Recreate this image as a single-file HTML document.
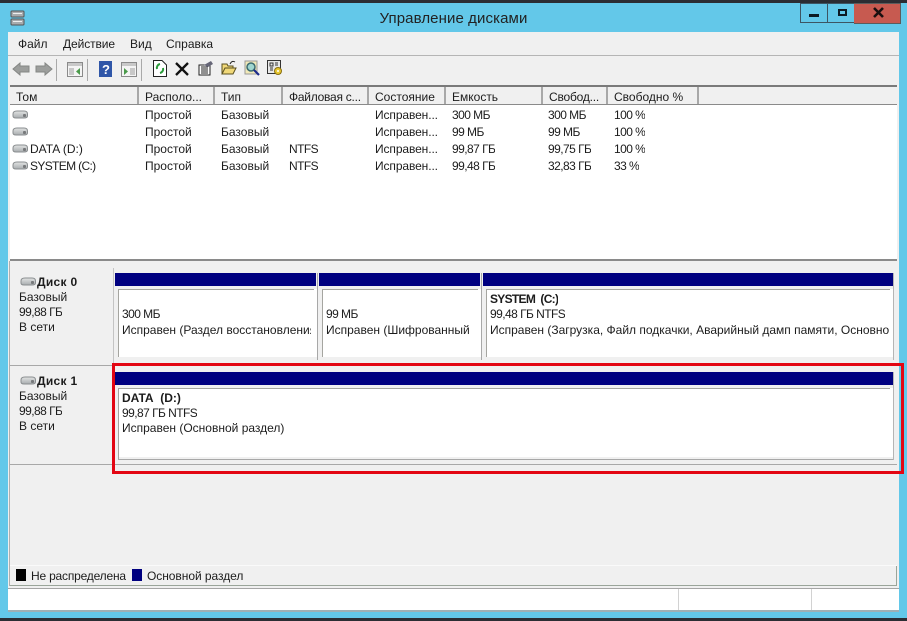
<!DOCTYPE html>
<html><head><meta charset="utf-8">
<style>
html,body{margin:0;padding:0;width:907px;height:621px;overflow:hidden;background:#63c8e9;font-family:"Liberation Sans",sans-serif;font-size:12px;color:#1c1c1c}
.a{position:absolute}
.t{position:absolute;white-space:nowrap;line-height:15px;overflow:hidden}
.n{letter-spacing:-.55px}
.hs{position:absolute;top:87px;height:17px;width:2px;background:#a8a8a8}
.sep{position:absolute;top:59px;height:22px;width:1px;background:#a9a9a9}
.bar{position:absolute;background:#000080;height:13px}
.box{position:absolute;background:#fff;box-sizing:border-box}
.tl{position:absolute;height:1px;background:#a5a5a0}
.ll{position:absolute;width:1px;background:#a5a5a0}
</style></head>
<body>
<svg width="0" height="0" style="position:absolute"><defs>
<linearGradient id="g" x1="0" y1="0" x2="0" y2="1"><stop offset="0" stop-color="#e2e4e4"/><stop offset="1" stop-color="#a8acae"/></linearGradient>
<g id="hd"><path d="M1 4 Q1 1 5 1 H12 Q15.5 1 15.5 4 V6 Q15.5 8 12 8 H4 Q1 8 1 6Z" fill="url(#g)" stroke="#8a8e90"/><rect x="11" y="4" width="3" height="3" rx="1" fill="#77797b"/></g>
</defs></svg>

<div class="a" style="left:0;top:0;width:907px;height:3px;background:#2b2d33"></div>
<div class="a" style="left:0;top:618px;width:907px;height:3px;background:#2b2d33"></div>

<svg class="a" style="left:10px;top:10px" width="16" height="16"><rect x="1" y="1" width="13" height="6" rx="1" fill="#a7abae" stroke="#555"/><rect x="1" y="9" width="13" height="6" rx="1" fill="#a7abae" stroke="#555"/><rect x="3" y="3" width="9" height="1" fill="#eee"/><rect x="3" y="11" width="9" height="1" fill="#eee"/></svg>
<div class="t" style="left:0;top:10px;width:907px;text-align:center;font-size:15px;line-height:18px;color:#222;letter-spacing:.1px">Управление дисками</div>

<div class="a" style="left:800px;top:3px;width:28px;height:20px;border:1px solid #3d5563;box-sizing:border-box"></div>
<div class="a" style="left:828px;top:3px;width:27px;height:20px;border:1px solid #3d5563;border-left:0;box-sizing:border-box"></div>
<div class="a" style="left:854px;top:3px;width:47px;height:21px;background:#c75a50;border:1px solid #5c5c5c;border-left:0;box-sizing:border-box"></div>
<div class="a" style="left:809px;top:14px;width:10px;height:3px;background:#0c1a24"></div>
<div class="a" style="left:838px;top:9px;width:5px;height:3px;border:2px solid #0c1a24;box-sizing:content-box"></div>
<svg class="a" style="left:873px;top:7px" width="12" height="11"><path d="M1 1 L10 10 M10 1 L1 10" stroke="#1a1010" stroke-width="2.6"/></svg>

<div class="a" style="left:8px;top:32px;width:891px;height:579px;background:#f0f0f0"></div>
<div class="a" style="left:8px;top:55px;width:891px;height:1px;background:#b5b5b5"></div>
<div class="t" style="left:18px;top:37px">Файл</div>
<div class="t" style="left:63px;top:37px;letter-spacing:-.1px">Действие</div>
<div class="t" style="left:130px;top:37px">Вид</div>
<div class="t" style="left:166px;top:37px">Справка</div>

<svg class="a" style="left:12px;top:62px" width="42" height="14"><path d="M1 7 L8 1 V4 H17 V10 H8 V13Z" fill="#9c9e9c" stroke="#858785"/><path d="M40 7 L33 1 V4 H24 V10 H33 V13Z" fill="#9c9e9c" stroke="#858785"/></svg>
<div class="sep" style="left:56px"></div>
<svg class="a" style="left:67px;top:62px" width="16" height="15"><rect x=".5" y=".5" width="15" height="14" fill="#f4f4f4" stroke="#8a8a8a"/><rect x="1" y="1" width="14" height="3" fill="#c8c8c8"/><rect x="2" y="6" width="5" height="7" fill="#c8c8c8"/><path d="M13 6 V13 L9 9.5Z" fill="#4a9a4a"/></svg>
<div class="sep" style="left:87px"></div>
<svg class="a" style="left:99px;top:61px" width="13" height="16"><rect width="13" height="16" fill="#2f56a8"/><text x="3" y="13" font-size="13" font-weight="bold" fill="#fff" font-family="Liberation Sans">?</text></svg>
<svg class="a" style="left:121px;top:62px" width="16" height="15"><rect x=".5" y=".5" width="15" height="14" fill="#f4f4f4" stroke="#8a8a8a"/><rect x="1" y="1" width="14" height="3" fill="#c8c8c8"/><rect x="9" y="6" width="5" height="7" fill="#c8c8c8"/><path d="M3 6 V13 L7 9.5Z" fill="#4a9a4a"/></svg>
<div class="sep" style="left:141px"></div>
<svg class="a" style="left:153px;top:60px" width="14" height="17"><path d="M.5 .5 H9 L13.5 5 V16.5 H.5Z" fill="#fff" stroke="#222"/><path d="M7 4 A4 4 0 0 0 4 9 M7 13 A4 4 0 0 0 10 8" fill="none" stroke="#2a9a3a" stroke-width="2"/></svg>
<svg class="a" style="left:175px;top:62px" width="14" height="14"><path d="M1 1 L13 13 M13 1 L1 13" stroke="#111" stroke-width="2.3"/></svg>
<svg class="a" style="left:198px;top:60px" width="16" height="16"><rect x="1" y="5" width="11" height="10" fill="#fff" stroke="#222"/><path d="M3 7 H10 M3 9 H10 M3 11 H10 M3 13 H10" stroke="#222"/><path d="M6 5 L13 1 L15 4 L10 7Z" fill="#667"/></svg>
<svg class="a" style="left:221px;top:60px" width="16" height="15"><path d="M1 14 V4 H6 L7 6 H12 V8 H4 L1 14 H12 L15 8 H4" fill="#f0d878" stroke="#5a5020"/><path d="M9 4 Q11 0 14 2" fill="none" stroke="#222"/></svg>
<svg class="a" style="left:244px;top:60px" width="16" height="17"><rect x="1" y="1" width="12" height="13" fill="#f1e9b8" stroke="#999"/><circle cx="7" cy="7" r="4" fill="#9fd6cf" stroke="#3a6a70" stroke-width="1.5"/><path d="M10 10 L15 15" stroke="#1b2a8a" stroke-width="2.2"/></svg>
<svg class="a" style="left:267px;top:60px" width="17" height="17"><rect x=".5" y=".5" width="13" height="13" fill="#e8e8e8" stroke="#333"/><path d="M3 3 H6 V6 H3Z M8 3 H11 M8 5 H11 M3 8 H6 M3 10 H6" stroke="#333" fill="none"/><circle cx="11" cy="11" r="3.5" fill="#e8c830" stroke="#8a7010"/><circle cx="11" cy="11" r="1" fill="#fff"/></svg>

<div class="a" style="left:10px;top:85px;width:887px;height:2px;background:#7a7a7a"></div>
<div class="a" style="left:10px;top:104px;width:887px;height:1px;background:#8a8a8a"></div>
<div class="hs" style="left:137px"></div>
<div class="hs" style="left:213px"></div>
<div class="hs" style="left:281px"></div>
<div class="hs" style="left:367px"></div>
<div class="hs" style="left:444px"></div>
<div class="hs" style="left:541px"></div>
<div class="hs" style="left:606px"></div>
<div class="hs" style="left:697px"></div>
<div class="t" style="left:16px;top:90px">Том</div>
<div class="t" style="left:145px;top:90px">Располо...</div>
<div class="t" style="left:221px;top:90px">Тип</div>
<div class="t" style="left:289px;top:90px;letter-spacing:-.25px">Файловая с...</div>
<div class="t" style="left:375px;top:90px">Состояние</div>
<div class="t" style="left:452px;top:90px">Емкость</div>
<div class="t" style="left:549px;top:90px;letter-spacing:-.2px">Свобод...</div>
<div class="t" style="left:614px;top:90px">Свободно %</div>

<div class="a" style="left:10px;top:105px;width:887px;height:154px;background:#fff"></div>
<svg class="a" style="left:12px;top:110px" width="17" height="9"><use href="#hd"/></svg>
<svg class="a" style="left:12px;top:127px" width="17" height="9"><use href="#hd"/></svg>
<svg class="a" style="left:12px;top:144px" width="17" height="9"><use href="#hd"/></svg>
<svg class="a" style="left:12px;top:161px" width="17" height="9"><use href="#hd"/></svg>
<div class="t" style="left:30px;top:142px">DATA (D:)</div>
<div class="t" style="left:30px;top:159px;letter-spacing:-.65px">SYSTEM (C:)</div>

<div class="t" style="left:145px;top:108px">Простой</div><div class="t" style="left:221px;top:108px">Базовый</div><div class="t" style="left:375px;top:108px;letter-spacing:-.1px">Исправен...</div><div class="t n" style="left:452px;top:108px">300 МБ</div><div class="t n" style="left:548px;top:108px">300 МБ</div><div class="t n" style="left:614px;top:108px">100 %</div>
<div class="t" style="left:145px;top:125px">Простой</div><div class="t" style="left:221px;top:125px">Базовый</div><div class="t" style="left:375px;top:125px;letter-spacing:-.1px">Исправен...</div><div class="t n" style="left:452px;top:125px">99 МБ</div><div class="t n" style="left:548px;top:125px">99 МБ</div><div class="t n" style="left:614px;top:125px">100 %</div>
<div class="t" style="left:145px;top:142px">Простой</div><div class="t" style="left:221px;top:142px">Базовый</div><div class="t n" style="left:289px;top:142px">NTFS</div><div class="t" style="left:375px;top:142px;letter-spacing:-.1px">Исправен...</div><div class="t n" style="left:452px;top:142px">99,87 ГБ</div><div class="t n" style="left:548px;top:142px">99,75 ГБ</div><div class="t n" style="left:614px;top:142px">100 %</div>
<div class="t" style="left:145px;top:159px">Простой</div><div class="t" style="left:221px;top:159px">Базовый</div><div class="t n" style="left:289px;top:159px">NTFS</div><div class="t" style="left:375px;top:159px;letter-spacing:-.1px">Исправен...</div><div class="t n" style="left:452px;top:159px">99,48 ГБ</div><div class="t n" style="left:548px;top:159px">32,83 ГБ</div><div class="t n" style="left:614px;top:159px">33 %</div>

<div class="a" style="left:10px;top:259px;width:887px;height:2px;background:#8a8a8a"></div>
<div class="a" style="left:9px;top:261px;width:1px;height:325px;background:#b0b0b0"></div>
<div class="a" style="left:10px;top:365px;width:102px;height:1px;background:#a8a8a8"></div>
<div class="a" style="left:10px;top:464px;width:887px;height:1px;background:#a8a8a8"></div>
<div class="a" style="left:113px;top:268px;width:1px;height:97px;background:#c4c4c4"></div>

<svg class="a" style="left:20px;top:277px" width="17" height="9"><use href="#hd"/></svg>
<div class="t" style="left:37px;top:275px;font-weight:bold;letter-spacing:.3px">Диск 0</div>
<div class="t" style="left:19px;top:290px">Базовый</div>
<div class="t n" style="left:19px;top:305px">99,88 ГБ</div>
<div class="t" style="left:19px;top:320px">В сети</div>

<svg class="a" style="left:20px;top:376px" width="17" height="9"><use href="#hd"/></svg>
<div class="t" style="left:37px;top:374px;font-weight:bold;letter-spacing:.3px">Диск 1</div>
<div class="t" style="left:19px;top:389px">Базовый</div>
<div class="t n" style="left:19px;top:404px">99,88 ГБ</div>
<div class="t" style="left:19px;top:419px">В сети</div>

<div class="bar" style="left:115px;top:273px;width:201px"></div>
<div class="bar" style="left:319px;top:273px;width:161px"></div>
<div class="bar" style="left:483px;top:273px;width:410px"></div>
<div class="box" style="left:118px;top:289px;width:199px;height:68px"></div>
<div class="box" style="left:322px;top:289px;width:159px;height:68px"></div>
<div class="box" style="left:486px;top:289px;width:408px;height:68px"></div>
<div class="tl" style="left:118px;top:289px;width:196px"></div><div class="ll" style="left:118px;top:289px;height:68px"></div>
<div class="tl" style="left:322px;top:289px;width:156px"></div><div class="ll" style="left:322px;top:289px;height:68px"></div>
<div class="tl" style="left:486px;top:289px;width:404px"></div><div class="ll" style="left:486px;top:289px;height:68px"></div>
<div class="a" style="left:317px;top:273px;width:1px;height:87px;background:#a8a8a8"></div>
<div class="a" style="left:481px;top:273px;width:1px;height:87px;background:#a8a8a8"></div>
<div class="a" style="left:893px;top:273px;width:1px;height:87px;background:#b5b5b5"></div>

<div class="t n" style="left:122px;top:307px">300 МБ</div>
<div class="t" style="left:122px;top:323px;width:189px">Исправен (Раздел восстановления</div>
<div class="t n" style="left:326px;top:307px">99 МБ</div>
<div class="t" style="left:326px;top:323px;width:148px">Исправен (Шифрованный</div>
<div class="t" style="left:490px;top:292px;font-weight:bold;letter-spacing:-.7px">SYSTEM&nbsp; (C:)</div>
<div class="t n" style="left:490px;top:307px">99,48 ГБ NTFS</div>
<div class="t" style="left:490px;top:323px;width:399px">Исправен (Загрузка, Файл подкачки, Аварийный дамп памяти, Основно</div>

<div class="bar" style="left:115px;top:372px;width:778px"></div>
<div class="box" style="left:118px;top:388px;width:775px;height:69px"></div>
<div class="tl" style="left:118px;top:388px;width:772px"></div><div class="ll" style="left:118px;top:388px;height:71px"></div>
<div class="a" style="left:118px;top:459px;width:776px;height:1px;background:#a8a8a8"></div>
<div class="a" style="left:893px;top:372px;width:1px;height:88px;background:#b5b5b5"></div>
<div class="t" style="left:122px;top:391px;font-weight:bold">DATA&nbsp; (D:)</div>
<div class="t n" style="left:122px;top:406px">99,87 ГБ NTFS</div>
<div class="t" style="left:122px;top:421px">Исправен (Основной раздел)</div>

<div class="a" style="left:112px;top:363px;width:792px;height:111px;border:3px solid #e30613;box-sizing:border-box"></div>

<div class="a" style="left:10px;top:565px;width:887px;height:1px;background:#fafafa"></div>
<div class="a" style="left:16px;top:569px;width:10px;height:12px;background:#000"></div>
<div class="t" style="left:31px;top:569px;letter-spacing:-.2px">Не распределена</div>
<div class="a" style="left:132px;top:569px;width:10px;height:12px;background:#000080"></div>
<div class="t" style="left:147px;top:569px;letter-spacing:-.05px">Основной раздел</div>
<div class="a" style="left:10px;top:585px;width:887px;height:1px;background:#9aa59a"></div>
<div class="a" style="left:896px;top:566px;width:1px;height:20px;background:#9aa59a"></div>

<div class="a" style="left:8px;top:588px;width:891px;height:23px;background:#fff;border-top:1px solid #a5a5a5;box-sizing:border-box"></div>
<div class="a" style="left:678px;top:589px;width:1px;height:22px;background:#d2d2d2"></div>
<div class="a" style="left:811px;top:589px;width:1px;height:22px;background:#d2d2d2"></div>
<div class="a" style="left:8px;top:610px;width:891px;height:2px;background:#9fb0b5"></div>
</body></html>
